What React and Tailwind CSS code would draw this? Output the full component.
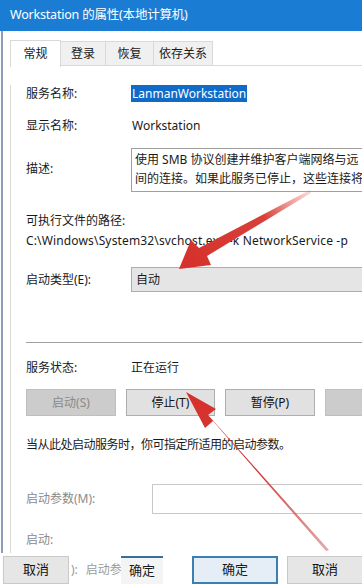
import React from 'react';

const cjk = { fontFamily: '"Noto Sans", "Noto Sans CJK SC", sans-serif' };

function Row({ label, children, className = '' }) {
  return (
    <div className={`flex items-center ${className}`}>
      <span className="w-[105px] shrink-0">{label}</span>
      {children}
    </div>
  );
}

function Btn({ children, disabled, className = '' }) {
  return (
    <div
      className={`h-[27px] flex items-center justify-center border ${
        disabled
          ? 'bg-[#cccccc] border-[#bfbfbf] text-[#8a8a8a]'
          : 'bg-[#e1e1e1] border-[#adadad] text-[#111]'
      } ${className}`}
    >
      {children}
    </div>
  );
}

function Arrows() {
  return (
    <svg className="absolute inset-0 pointer-events-none" width="362" height="586" viewBox="0 0 362 586">
      <defs>
        <linearGradient id="a1" x1="310" y1="190" x2="180" y2="268" gradientUnits="userSpaceOnUse">
          <stop offset="0" stopColor="#e35a55" stopOpacity="0.2" />
          <stop offset="0.35" stopColor="#d8403a" />
          <stop offset="1" stopColor="#d6302b" />
        </linearGradient>
        <linearGradient id="a2" x1="330" y1="552" x2="186" y2="392" gradientUnits="userSpaceOnUse">
          <stop offset="0" stopColor="#c85a5a" stopOpacity="0.5" />
          <stop offset="0.5" stopColor="#d23a36" />
          <stop offset="1" stopColor="#d6302b" />
        </linearGradient>
      </defs>
      {/* upper arrow, pointing at the startup type box */}
      <polygon points="310,190 311,193 207,256 211,265 179,269 191,240 199,248" fill="url(#a1)" />
      {/* lower arrow, pointing at the stop button */}
      <polygon points="329,550 326,551 213,421 205,428 186,392 216,409 208,415" fill="url(#a2)" />
    </svg>
  );
}

export default function App() {
  return (
    <div className="relative w-[362px] h-[586px] overflow-hidden bg-white text-[12px] text-[#1a1a1a]" style={cjk}>
      <div className="h-[31px] bg-[#1b7cd3] flex items-center pl-[10px] text-white text-[12.5px] tracking-[-0.2px]">
        Workstation 的属性(本地计算机)
      </div>

      <div className="ml-[1px] border-l-2 border-[#8aa0b8] h-[522px] bg-white">
        <div className="flex pt-[8px] pl-[7px] h-[35px] items-end">
          <div className="w-[51px] h-[27px] border border-b-0 border-[#d9d9d9] bg-white flex items-center justify-center relative top-[1px]">
            常规
          </div>
          <div className="w-[45px] h-[25px] border border-l-0 border-[#d9d9d9] bg-[#f0f0f0] flex items-center justify-center">
            登录
          </div>
          <div className="w-[48px] h-[25px] border border-l-0 border-[#d9d9d9] bg-[#f0f0f0] flex items-center justify-center">
            恢复
          </div>
          <div className="w-[59px] h-[25px] border border-l-0 border-[#d9d9d9] bg-[#f0f0f0] flex items-center justify-center">
            依存关系
          </div>
          <div className="flex-1 border-b border-[#d9d9d9]" />
        </div>

        <div className="ml-[7px] border-l border-[#d9d9d9] pl-[15px] h-[487px]">
          <Row label="服务名称:" className="mt-[19px] h-[17px]">
            <span className="bg-[#0f6bc7] text-white px-[1px] h-[17px] flex items-center">LanmanWorkstation</span>
          </Row>
          <Row label="显示名称:" className="mt-[15px] h-[17px]">
            <span className="pl-[1px]">Workstation</span>
          </Row>
          <div className="flex mt-[14px]">
            <span className="w-[105px] shrink-0 pt-[12px]">描述:</span>
            <div className="flex-1 h-[44px] border border-[#a0a0a0] border-r-0 pl-[3px] pt-[1px] leading-[19px] overflow-hidden">
              <div className="whitespace-nowrap">使用 SMB 协议创建并维护客户端网络与远</div>
              <div className="whitespace-nowrap">间的连接。如果此服务已停止，这些连接将</div>
            </div>
          </div>
          <div className="mt-[20px] h-[17px] leading-[17px]">可执行文件的路径:</div>
          <div className="mt-[3px] h-[17px] leading-[17px] whitespace-nowrap tracking-[0.15px]">
            C:\Windows\System32\svchost.exe -k NetworkService -p
          </div>
          <Row label="启动类型(E):" className="mt-[18px] h-[25px]">
            <div className="flex-1 h-[25px] bg-[#e5e5e5] border border-[#adadad] border-r-0 flex items-center pl-[4px]">
              自动
            </div>
          </Row>
          <div className="mt-[50px] h-px bg-[#a0a0a0]" />
          <Row label="服务状态:" className="mt-[16px] h-[17px]">
            <span>正在运行</span>
          </Row>
          <div className="flex mt-[13px] gap-[10px]">
            <Btn disabled className="w-[97px]">启动(S)</Btn>
            <Btn className="w-[96px]">停止(T)</Btn>
            <Btn className="w-[97px]">暂停(P)</Btn>
            <Btn disabled className="w-[40px] border-r-0" />
          </div>
          <div className="mt-[20px] h-[17px] leading-[17px] tracking-[-0.5px]">当从此处启动服务时，你可指定所适用的启动参数。</div>
          <div className="flex items-center mt-[31px]">
            <span className="w-[126px] shrink-0 text-[#8a8a8a]">启动参数(M):</span>
            <div className="flex-1 h-[30px] border border-[#c8c8c8] border-r-0" />
          </div>
          <div className="mt-[17px] text-[#8a8a8a]">启动:</div>
        </div>
      </div>

      <div className="flex items-center h-[33px] bg-white">
        <Btn className="w-[66px] ml-[3px] !h-[28px] text-[13px] !bg-[#e6e6e6] !border-[#c9c9c9]">取消</Btn>
        <div className="w-[52px] h-[28px] flex items-center text-[#9a9a9a] whitespace-nowrap overflow-hidden">
          <span className="pl-[2px]">):</span>
          <span className="pl-[8px]">启动参</span>
        </div>
        <div className="w-[42px] h-[28px] flex items-center justify-center text-[13px] border-t-2 border-[#3a6f9a] bg-[#f4f4f4]">
          确定
        </div>
        <div className="w-[29px]" />
        <div className="w-[86px] h-[28px] flex items-center justify-center text-[13px] bg-[#e5eef6] border-2 border-[#3c7fb1]">
          确定
        </div>
        <div className="w-[9px]" />
        <Btn className="flex-1 !h-[28px] text-[13px] !bg-[#e6e6e6] !border-[#c9c9c9] border-r-0">取消</Btn>
      </div>

      <Arrows />
    </div>
  );
}
